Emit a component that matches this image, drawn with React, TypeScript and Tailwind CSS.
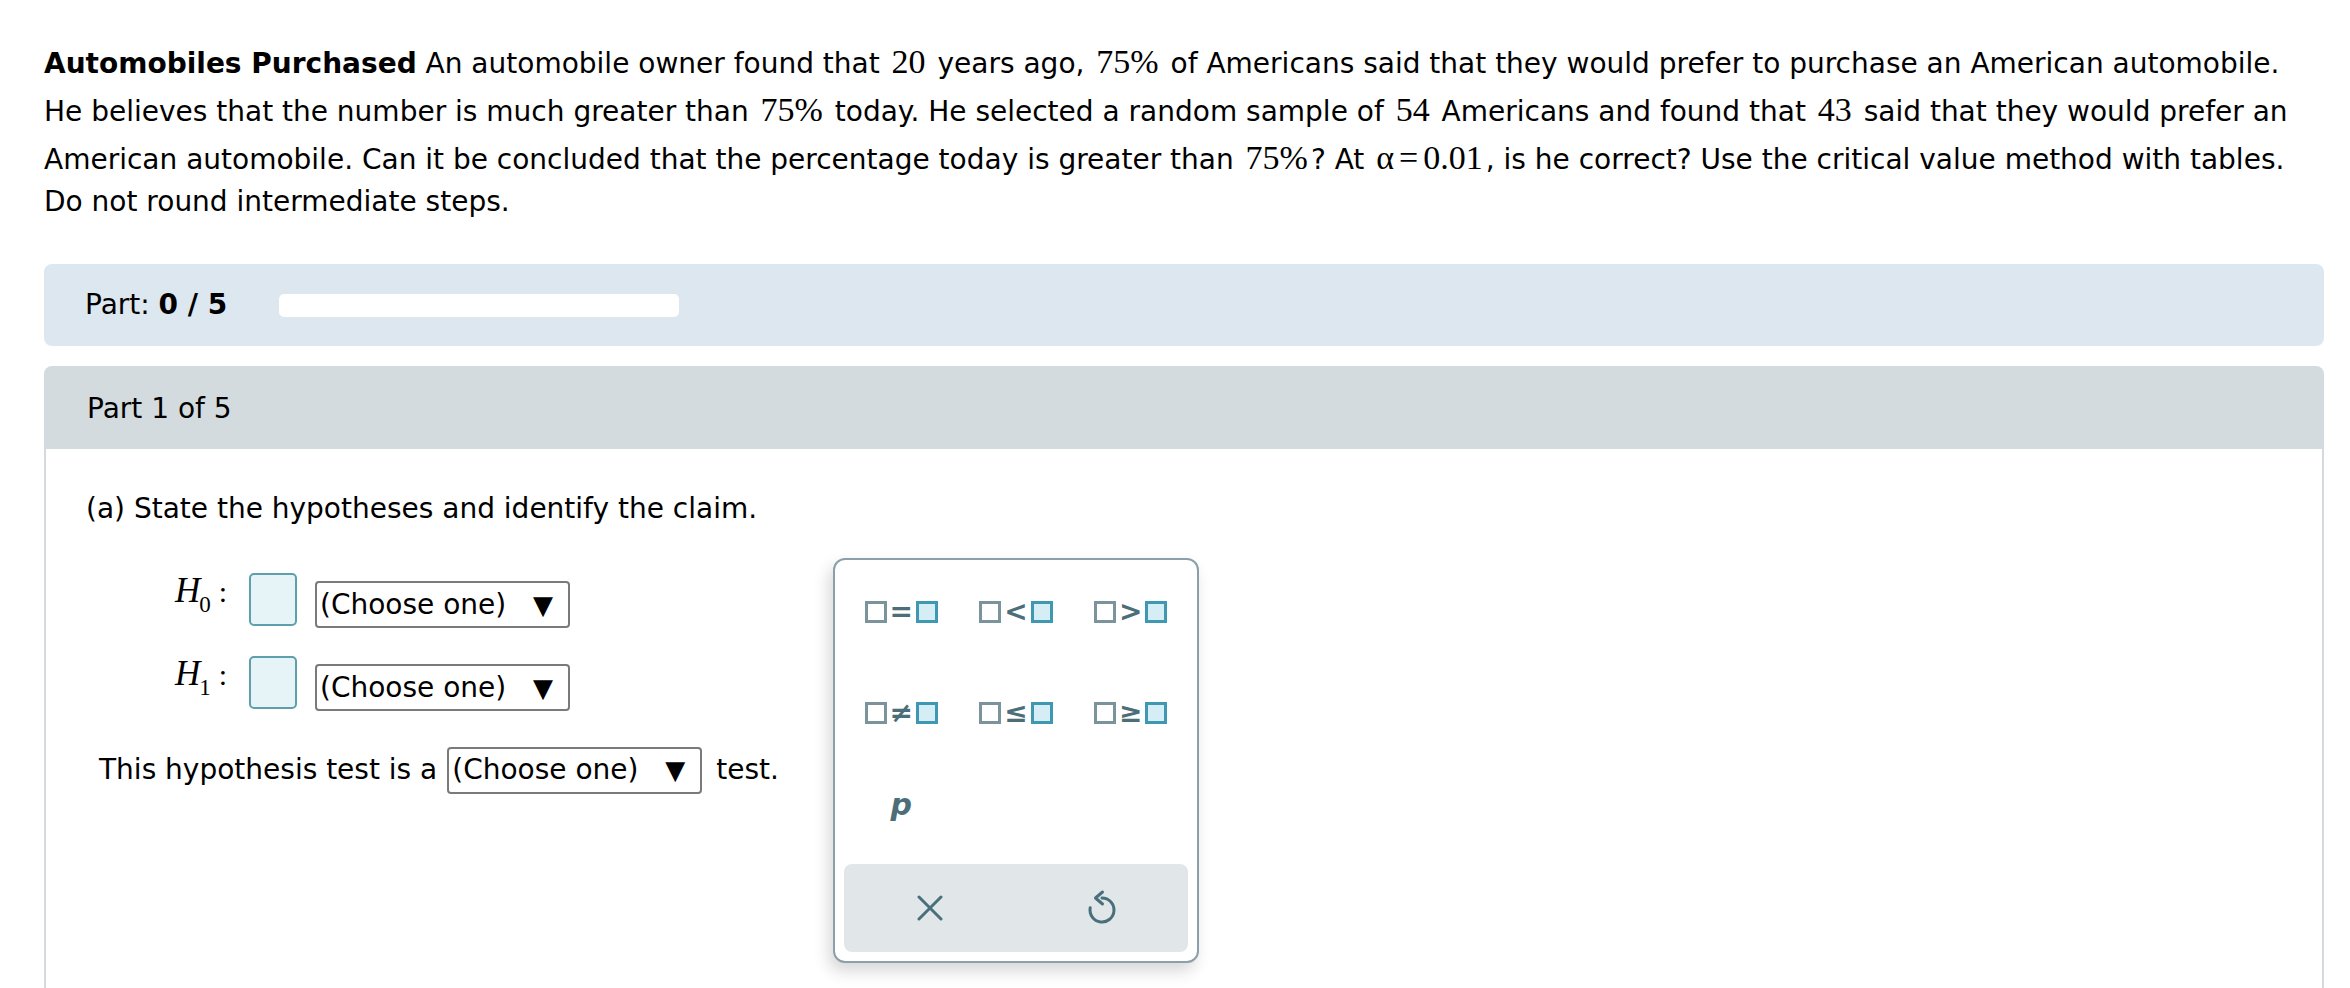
import React from 'react';

const sans = "font-['DejaVu_Sans','Verdana',sans-serif]";
const serif = "font-['Liberation_Serif','DejaVu_Serif',serif]";

function M({ children }: { children: React.ReactNode }) {
  return <span className={`${serif} px-[3px] text-[34px] leading-[48px]`}>{children}</span>;
}

function ChooseOne() {
  return (
    <div className="flex h-[47px] w-[255px] items-center justify-between rounded-[4px] border-2 border-[#7a7a7a] bg-white pl-[3px] pr-[15px]">
      <span className="whitespace-nowrap">(Choose one)</span>
      <span className="text-[26px]">▼</span>
    </div>
  );
}

function HypRow({ sub }: { sub: string }) {
  return (
    <div className="flex items-start">
      <div className={`${serif} flex w-[74px] items-baseline leading-none`}>
        <span className="text-[35px] italic">H</span>
        <span className="relative top-[10px] -ml-[1px] text-[23px]">{sub}</span>
        <span className="ml-[8px] text-[30px]">:</span>
      </div>
      <div className="h-[53px] w-[48px] rounded-[5px] border-2 border-[#5e9fae] bg-[#e6f4f8]" />
      <div className="ml-[18px] mt-[8px]">
        <ChooseOne />
      </div>
    </div>
  );
}

function Sym({ op }: { op: string }) {
  return (
    <div className="flex items-center justify-center gap-[3px]">
      <div className="h-[22px] w-[22px] border-[3px] border-[#7b949c] bg-white" />
      <span className={`${sans} text-[28px] font-bold leading-none text-[#4b6e79]`}>{op}</span>
      <div className="h-[22px] w-[22px] border-[3px] border-[#3f98b1] bg-[#d5edf4]" />
    </div>
  );
}

function Palette() {
  return (
    <div className="absolute left-[833px] top-[558px] flex h-[405px] w-[366px] flex-col rounded-[12px] border-2 border-[#8ba0a8] bg-white px-[9px] pb-[9px] pt-[1px] shadow-[-4px_8px_16px_rgba(0,0,0,0.16)]">
      <div className="grid flex-1 grid-cols-3 grid-rows-3">
        <Sym op="=" />
        <Sym op="<" />
        <Sym op=">" />
        <Sym op="≠" />
        <Sym op="≤" />
        <Sym op="≥" />
        <div className="flex items-center justify-center">
          <span className={`${sans} -mt-[17px] text-[30px] font-bold italic leading-none text-[#4b6e79]`}>p</span>
        </div>
      </div>
      <div className="grid h-[88px] grid-cols-2 rounded-[8px] bg-[#e1e6e9]">
        <div className="flex items-center justify-center">
          <svg width="26" height="26" viewBox="0 0 26 26" fill="none" stroke="#4a6f7c" strokeWidth="3" strokeLinecap="round">
            <path d="M2 2 L24 24 M24 2 L2 24" />
          </svg>
        </div>
        <div className="flex items-center justify-center">
          <svg width="32" height="36" viewBox="0 0 32 36" fill="none" stroke="#4a6f7c" strokeWidth="3" strokeLinecap="round" strokeLinejoin="round" className="mt-[-2px]">
            <path d="M16 9 A12 12 0 1 1 4.2 18.8" />
            <path d="M16.5 3 L9.5 9 L16.5 15" />
          </svg>
        </div>
      </div>
    </div>
  );
}

export default function App() {
  return (
    <div className={`${sans} relative h-[988px] overflow-hidden bg-white pl-[44px] pr-[26px] pt-[38px] text-[28px] leading-[40px] text-black`}>
      <p className="whitespace-nowrap">
        <b>Automobiles Purchased</b> An automobile owner found that <M>20</M> years ago, <M>75%</M> of Americans said that
        they would prefer to purchase an American automobile.
        <br />
        He believes that the number is much greater than <M>75%</M> today. He selected a random sample of <M>54</M>{' '}
        Americans and found that <M>43</M> said that they would prefer an
        <br />
        American automobile. Can it be concluded that the percentage today is greater than <M>75%</M>? At{' '}
        <M>
          α<span className="mx-[5px]">=</span>0.01
        </M>
        , is he correct? Use the critical value method with tables.
        <br />
        Do not round intermediate steps.
      </p>

      <div className="mt-[42px] flex h-[82px] items-center rounded-[8px] bg-[#dde7f0] pl-[41px]">
        <span>
          Part: <b>0 / 5</b>
        </span>
        <div className="ml-[52px] h-[23px] w-[400px] rounded-[5px] bg-white" />
      </div>

      <div className="mt-[20px]">
        <div className="flex h-[83px] items-center rounded-t-[8px] bg-[#d3dbdf] pl-[43px] pt-[3px]">Part 1 of 5</div>
        <div className="h-[600px] border-x-2 border-[#d3dbdf] bg-white pl-[40px] pt-[40px]">
          <p>(a) State the hypotheses and identify the claim.</p>
          <div className="ml-[89px] mt-[44px] flex flex-col gap-[28px]">
            <HypRow sub="0" />
            <HypRow sub="1" />
          </div>
          <div className="ml-[13px] mt-[34px] flex h-[50px] items-center">
            <span>This hypothesis test is a</span>
            <div className="ml-[10px] mr-[14px]">
              <ChooseOne />
            </div>
            <span>test.</span>
          </div>
        </div>
      </div>

      <Palette />
    </div>
  );
}
